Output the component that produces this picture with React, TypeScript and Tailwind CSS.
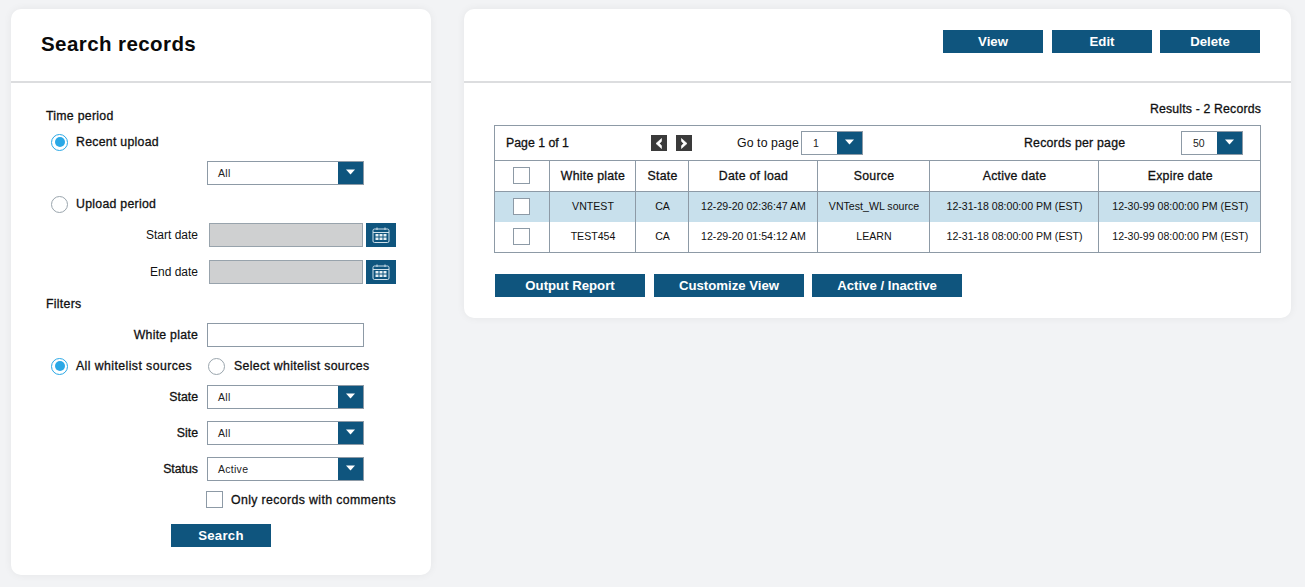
const Caret = () => (
  <svg width="9" height="6" viewBox="0 0 9 6"><path d="M0 0.5H9L4.5 5.5Z" fill="#fff" /></svg>
);

const HEAVY = "[-webkit-text-stroke:0.3px]";

function Select({ value, w = "w-[157px]", pad = "pl-[10px]" }: { value: string; w?: string; pad?: string }) {
  return (
    <div className={`${w} h-[24px] flex border border-[#8d9aa6] bg-white shrink-0`}>
      <div className={`flex-1 flex items-center pt-[1px] ${pad} text-[10.5px] text-[#222]`}>{value}</div>
      <div className="w-[25px] bg-[#0f557e] flex items-center justify-center pb-[3px]"><Caret /></div>
    </div>
  );
}

function Radio({ on }: { on?: boolean }) {
  return (
    <span className={`w-[17px] h-[17px] rounded-full border bg-white flex items-center justify-center shrink-0 ${on ? "border-[#2aa8e6]" : "border-[#9aa5ad]"}`}>
      {on && <span className="w-[10px] h-[10px] rounded-full bg-[#2aa8e6]" />}
    </span>
  );
}

function Check() {
  return <span className="block w-[17px] h-[17px] border border-[#8d9aa6] bg-white shrink-0" />;
}

function Btn({ children, w = "w-[100px]" }: { children: React.ReactNode; w?: string }) {
  return (
    <button className={`${w} h-[23px] pt-[1px] bg-[#0f557e] text-white font-bold text-[13.2px] flex items-center justify-center shrink-0`}>
      {children}
    </button>
  );
}

function CalIcon() {
  return (
    <div className="w-[30px] h-[24px] bg-[#0f557e] flex items-center justify-center shrink-0">
      <svg width="18" height="16" viewBox="0 0 18 16" fill="none" stroke="#cfe0ea" strokeWidth="1">
        <rect x="1" y="2" width="16" height="13.5" rx="1.5" />
        <path d="M1 5.5H17M5 0.5V3M13 0.5V3" />
        <g fill="#e6eff4" stroke="none">
          <rect x="3.5" y="7" width="3" height="2.5" />
          <rect x="7.5" y="7" width="3" height="2.5" />
          <rect x="11.5" y="7" width="3" height="2.5" />
          <rect x="3.5" y="10.5" width="3" height="2.5" />
          <rect x="7.5" y="10.5" width="3" height="2.5" />
          <rect x="11.5" y="10.5" width="3" height="2.5" />
        </g>
      </svg>
    </div>
  );
}

function Field({ label, value, mt }: { label: string; value: string; mt: string }) {
  return (
    <div className={`flex items-center h-[24px] ${mt}`}>
      <span className={`w-[152px] text-right tracking-normal ${HEAVY}`}>{label}</span>
      <span className="w-[9px] shrink-0" />
      <Select value={value} />
    </div>
  );
}

function DateRow({ label, mt }: { label: string; mt: string }) {
  return (
    <div className={`flex items-center h-[24px] ${mt}`}>
      <span className="w-[152px] text-right text-[12px] tracking-normal">{label}</span>
      <span className="w-[11px] shrink-0" />
      <div className="w-[154px] h-[24px] bg-[#cfd0d1] border border-[#98a3ac] shrink-0" />
      <span className="w-[3px] shrink-0" />
      <CalIcon />
    </div>
  );
}

const rows = [
  { plate: "VNTEST", state: "CA", load: "12-29-20 02:36:47 AM", source: "VNTest_WL source", active: "12-31-18 08:00:00 PM (EST)", expire: "12-30-99 08:00:00 PM (EST)", hi: true },
  { plate: "TEST454", state: "CA", load: "12-29-20 01:54:12 AM", source: "LEARN", active: "12-31-18 08:00:00 PM (EST)", expire: "12-30-99 08:00:00 PM (EST)", hi: false },
];

const headers = ["White plate", "State", "Date of load", "Source", "Active date", "Expire date"];

export default function App() {
  return (
    <div className="w-[1305px] h-[587px] overflow-hidden bg-[#f2f3f5] flex items-start gap-[33px] pl-[11px] pt-[9px] text-[12.3px] text-[#111] font-['Liberation_Sans',Arial,sans-serif]">
      <section className="w-[420px] h-[566px] bg-white rounded-[10px] shadow-[0_0_8px_rgba(0,0,0,0.06)] shrink-0">
        <header className="h-[74px] border-b-2 border-[#dcdddf] pl-[30px] pt-[21px]">
          <h1 className="text-[20.5px] leading-[28px] font-bold tracking-[0.42px] text-[#0a0a0a]">Search records</h1>
        </header>
        <div className="pl-[35px] pt-[25px] tracking-[0.28px]">
          <div className={`h-[16px] leading-[16px] ${HEAVY}`}>Time period</div>
          <div className="flex items-center gap-[8px] ml-[5px] mt-[9px] h-[18px]"><Radio on /><span className={HEAVY}>Recent upload</span></div>
          <div className="ml-[161px] mt-[10px]"><Select value="All" /></div>
          <div className="flex items-center gap-[8px] ml-[5px] mt-[10px] h-[18px]"><Radio /><span className={HEAVY}>Upload period</span></div>
          <DateRow label="Start date" mt="mt-[10px]" />
          <DateRow label="End date" mt="mt-[13px]" />
          <div className={`h-[16px] leading-[16px] mt-[12px] ${HEAVY}`}>Filters</div>
          <div className="flex items-center h-[24px] mt-[11px]">
            <span className={`w-[152px] text-right tracking-[0.25px] ${HEAVY}`}>White plate</span>
            <span className="w-[9px] shrink-0" />
            <div className="w-[157px] h-[24px] border border-[#8d9aa6] bg-white shrink-0" />
          </div>
          <div className="flex items-center ml-[5px] mt-[10px] h-[18px]">
            <Radio on /><span className={`ml-[8px] w-[132px] whitespace-nowrap tracking-[0.42px] ${HEAVY}`}>All whitelist sources</span>
            <Radio /><span className={`ml-[9px] whitespace-nowrap tracking-[0.32px] ${HEAVY}`}>Select whitelist sources</span>
          </div>
          <Field label="State" value="All" mt="mt-[10px]" />
          <Field label="Site" value="All" mt="mt-[12px]" />
          <Field label="Status" value="Active" mt="mt-[12px]" />
          <div className="flex items-center ml-[160px] mt-[10px] h-[17px]">
            <Check /><span className={`ml-[8px] pt-[1px] whitespace-nowrap tracking-[0.38px] ${HEAVY}`}>Only records with comments</span>
          </div>
          <div className="ml-[125px] mt-[16px]"><Btn>Search</Btn></div>
        </div>
      </section>

      <section className="w-[827px] h-[309px] bg-white rounded-[10px] shadow-[0_0_8px_rgba(0,0,0,0.06)] shrink-0">
        <header className="h-[74px] border-b-2 border-[#dcdddf] flex justify-end pt-[21px] pr-[31px]">
          <div className="flex items-start">
            <Btn>View</Btn>
            <span className="w-[9px]" />
            <Btn>Edit</Btn>
            <span className="w-[8px]" />
            <Btn>Delete</Btn>
          </div>
        </header>
        <div className="pl-[30px]">
          <div className={`h-[16px] leading-[16px] mt-[18px] w-[767px] text-right tracking-[0.16px] ${HEAVY}`}>Results - 2 Records</div>
          <div className="w-[767px] mt-[8px] border border-[#8d9aa6]">
            <div className="flex items-center h-[35px] border-b border-[#8d9aa6] pl-[11px]">
              <span className={`w-[145px] ${HEAVY}`}>Page 1 of 1</span>
              <span className="w-[16px] h-[16px] bg-[#3a3a3a] flex items-center justify-center shrink-0">
                <svg width="8" height="11" viewBox="0 0 8 11"><path d="M6.5 0.5L1 5.5L6.5 10.5V7.8L4.5 5.5L6.5 3.2Z" fill="#fff" stroke="#fff" strokeWidth="0.6" /></svg>
              </span>
              <span className="w-[9px] shrink-0" />
              <span className="w-[16px] h-[16px] bg-[#3a3a3a] flex items-center justify-center shrink-0">
                <svg width="8" height="11" viewBox="0 0 8 11"><path d="M1.5 0.5L7 5.5L1.5 10.5V7.8L3.5 5.5L1.5 3.2Z" fill="#fff" stroke="#fff" strokeWidth="0.6" /></svg>
              </span>
              <span className="ml-[45px] w-[64px] whitespace-nowrap tracking-[0.1px]">Go to page</span>
              <Select value="1" w="w-[62px]" pad="pl-[11px]" />
              <span className={`ml-[161px] w-[157px] whitespace-nowrap tracking-[0.22px] ${HEAVY}`}>Records per page</span>
              <Select value="50" w="w-[62px]" pad="pl-[11px]" />
            </div>
            <table className="w-[765px] table-fixed border-collapse">
              <colgroup>
                <col className="w-[54px]" />
                <col className="w-[86px]" />
                <col className="w-[53px]" />
                <col className="w-[129px]" />
                <col className="w-[112px]" />
                <col className="w-[169px]" />
                <col className="w-[162px]" />
              </colgroup>
              <thead>
                <tr className="h-[30px]">
                  <th className="border-r border-b border-[#8d9aa6] p-0"><span className="flex justify-center"><Check /></span></th>
                  {headers.map((h, i) => (
                    <th key={h} className={`border-b border-[#8d9aa6] p-0 pl-[2px] font-normal tracking-[0.25px] ${HEAVY} ${i < 5 ? "border-r" : ""}`}>{h}</th>
                  ))}
                </tr>
              </thead>
              <tbody className="text-[10.6px]">
                {rows.map((r) => (
                  <tr key={r.plate} className={`h-[30.5px] ${r.hi ? "bg-[#c8e0ec]" : "bg-white"}`}>
                    <td className="border-r border-[#8d9aa6] p-0"><span className="flex justify-center"><Check /></span></td>
                    <td className="border-r border-[#8d9aa6] p-0 pl-[2px] text-center">{r.plate}</td>
                    <td className="border-r border-[#8d9aa6] p-0 pl-[2px] text-center">{r.state}</td>
                    <td className="border-r border-[#8d9aa6] p-0 pl-[2px] text-center">{r.load}</td>
                    <td className="border-r border-[#8d9aa6] p-0 pl-[2px] text-center whitespace-nowrap">{r.source}</td>
                    <td className="border-r border-[#8d9aa6] p-0 pl-[2px] text-center whitespace-nowrap">{r.active}</td>
                    <td className="p-0 pl-[2px] text-center whitespace-nowrap">{r.expire}</td>
                  </tr>
                ))}
              </tbody>
            </table>
          </div>
          <div className="flex mt-[21px] ml-[1px]">
            <Btn w="w-[150px]">Output Report</Btn>
            <span className="w-[9px]" />
            <Btn w="w-[150px]">Customize View</Btn>
            <span className="w-[8px]" />
            <Btn w="w-[150px]">Active / Inactive</Btn>
          </div>
        </div>
      </section>
    </div>
  );
}
